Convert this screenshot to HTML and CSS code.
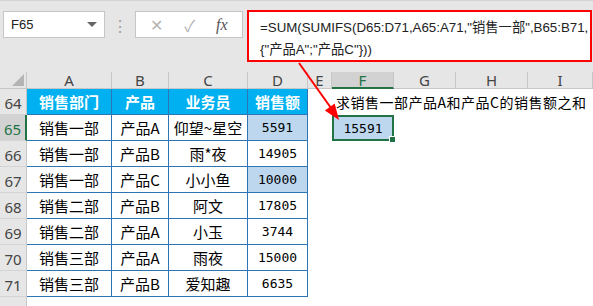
FILE: index.html
```html
<!DOCTYPE html>
<html lang="zh-CN">
<head>
  <meta charset="UTF-8" />
  <title>SUMIFS 多条件求和</title>
  <link rel="stylesheet" href="styles.css">
</head>
<body>

<div class="app">
  <!-- Formula bar -->
  <div class="formula-bar">
    <div class="name-box">
      <span>F65</span>
      <span class="dropdown"></span>
    </div>
    <div class="grip">⋮</div>
    <div class="fx-buttons">
      <span class="btn-x">✕</span>
      <span class="btn-ok">✓</span>
      <span class="btn-fx">fx</span>
    </div>
    <div class="formula">
      <div>=SUM(SUMIFS(D65:D71,A65:A71,"销售一部",B65:B71,</div>
      <div>{"产品A";"产品C"}))</div>
    </div>
  </div>

  <!-- Sheet -->
  <div class="sheet">
    <div class="corner"></div>
    <div class="ch">A</div>
    <div class="ch">B</div>
    <div class="ch">C</div>
    <div class="ch">D</div>
    <div class="ch">E</div>
    <div class="ch active">F</div>
    <div class="ch">G</div>
    <div class="ch">H</div>
    <div class="ch">I</div>

    <div class="rh">64</div>
    <div class="tc th">销售部门</div>
    <div class="tc th">产品</div>
    <div class="tc th">业务员</div>
    <div class="tc th">销售额</div>
    <div class="cell"></div>
    <div class="cell note">求销售一部产品A和产品C的销售额之和</div>
    <div class="cell"></div><div class="cell"></div><div class="cell"></div>

    <div class="rh active">65</div>
    <div class="tc">销售一部</div>
    <div class="tc">产品A</div>
    <div class="tc">仰望~星空</div>
    <div class="tc num hl">5591</div>
    <div class="cell"></div>
    <div class="cell num selected">15591</div>
    <div class="cell"></div><div class="cell"></div><div class="cell"></div>

    <div class="rh">66</div>
    <div class="tc">销售一部</div>
    <div class="tc">产品B</div>
    <div class="tc">雨*夜</div>
    <div class="tc num">14905</div>
    <div class="cell"></div><div class="cell"></div><div class="cell"></div><div class="cell"></div><div class="cell"></div>

    <div class="rh">67</div>
    <div class="tc">销售一部</div>
    <div class="tc">产品C</div>
    <div class="tc">小小鱼</div>
    <div class="tc num hl">10000</div>
    <div class="cell"></div><div class="cell"></div><div class="cell"></div><div class="cell"></div><div class="cell"></div>

    <div class="rh">68</div>
    <div class="tc">销售二部</div>
    <div class="tc">产品B</div>
    <div class="tc">阿文</div>
    <div class="tc num">17805</div>
    <div class="cell"></div><div class="cell"></div><div class="cell"></div><div class="cell"></div><div class="cell"></div>

    <div class="rh">69</div>
    <div class="tc">销售二部</div>
    <div class="tc">产品A</div>
    <div class="tc">小玉</div>
    <div class="tc num">3744</div>
    <div class="cell"></div><div class="cell"></div><div class="cell"></div><div class="cell"></div><div class="cell"></div>

    <div class="rh">70</div>
    <div class="tc">销售三部</div>
    <div class="tc">产品A</div>
    <div class="tc">雨夜</div>
    <div class="tc num">15000</div>
    <div class="cell"></div><div class="cell"></div><div class="cell"></div><div class="cell"></div><div class="cell"></div>

    <div class="rh">71</div>
    <div class="tc">销售三部</div>
    <div class="tc">产品B</div>
    <div class="tc">爱知趣</div>
    <div class="tc num">6635</div>
    <div class="cell"></div><div class="cell"></div><div class="cell"></div><div class="cell"></div><div class="cell"></div>

    <div class="rh"></div>
  </div>

  <!-- Red callout arrow -->
  <svg class="arrow" width="593" height="306" viewBox="0 0 593 306">
    <line x1="299" y1="63" x2="331" y2="108" stroke="#ff0000" stroke-width="2"/>
    <polygon points="339,120 324.9,110.4 334.7,103.5" fill="#ff0000"/>
  </svg>
</div>

</body>
</html>
```

FILE: styles.css
```css
body {
  margin: 0;
  font-family: "Noto Sans", "Noto Sans CJK SC", sans-serif;
  background-color: #ffffff;
  color: #000;
  overflow: hidden;
}

.app {
  width: 593px;
  height: 306px;
  position: relative;
  overflow: hidden;
}

/* Formula bar */
.formula-bar {
  height: 72px;
  background-color: #e6e6e6;
  border-top: 1px solid #d4d4d4;
  box-sizing: border-box;
  display: flex;
  align-items: flex-start;
  padding-top: 9px;
}

.name-box {
  margin-left: 3px;
  margin-top: 1px;
  width: 102px;
  height: 27px;
  box-sizing: border-box;
  background-color: white;
  border: 1px solid #c6c6c6;
  display: flex;
  align-items: center;
  justify-content: space-between;
  padding: 0 7px 0 7px;
  font-family: "Liberation Sans", sans-serif;
  font-size: 13px;
  color: #222;
}

.dropdown {
  width: 0;
  height: 0;
  border-left: 5px solid transparent;
  border-right: 5px solid transparent;
  border-top: 5px solid #666;
}

.grip {
  width: 30px;
  text-align: center;
  margin-top: 5px;
  font-size: 16px;
  color: #a0a0a0;
}

.fx-buttons {
  margin-top: 1px;
  width: 108px;
  height: 27px;
  box-sizing: border-box;
  background-color: white;
  border: 1px solid #c6c6c6;
  display: flex;
  align-items: center;
  justify-content: space-around;
  padding: 0 4px;
  color: #b4b4b4;
  font-size: 16px;
}

.btn-fx {
  font-family: "Liberation Serif", serif;
  font-style: italic;
  color: #555;
  font-size: 16px;
}

.formula {
  margin-left: 4px;
  width: 345px;
  height: 52px;
  box-sizing: border-box;
  background-color: white;
  border: 2px solid #ff0000;
  padding: 5px 0 0 11px;
  font-family: "Liberation Sans", "Noto Sans CJK SC", sans-serif;
  font-size: 13.3px;
  line-height: 22px;
  color: #222;
  white-space: nowrap;
}

/* Sheet grid */
.sheet {
  display: grid;
  grid-template-columns: 27px 85px 57px 79px 60px 24px 62px 62px 72px 1fr;
  grid-template-rows: 17px;
  grid-auto-rows: 26px;
}

.sheet > div {
  box-sizing: border-box;
  display: flex;
  align-items: center;
  justify-content: center;
}

.corner {
  background-color: #e6e6e6;
  border-right: 1px solid #c6c6c6;
  border-bottom: 1px solid #c6c6c6;
  position: relative;
}

.corner::after {
  content: "";
  position: absolute;
  right: 2px;
  bottom: 2px;
  border-left: 12px solid transparent;
  border-bottom: 12px solid #b4b4b4;
}

.ch {
  background-color: #e6e6e6;
  border-right: 1px solid #c6c6c6;
  border-bottom: 1px solid #c6c6c6;
  font-size: 15px;
  color: #444;
}

.ch.active {
  background-color: #d2d2d2;
  border-bottom: 2px solid #217346;
  color: #217346;
}

.rh {
  background-color: #e6e6e6;
  border-right: 1px solid #c6c6c6;
  border-bottom: 1px solid #d4d4d4;
  font-size: 15px;
  color: #444;
  align-items: flex-end !important;
  padding-bottom: 1px;
}

.rh.active {
  background-color: #d2d2d2;
  border-right: 2px solid #217346;
  color: #217346;
}

.tc {
  border-right: 1px solid #2e75b6;
  border-bottom: 1px solid #2e75b6;
  font-family: "Noto Sans CJK SC", sans-serif;
  font-size: 15px;
  white-space: nowrap;
}

.th {
  background-color: #00b0f0;
  color: white;
  font-weight: bold;
}

.num {
  font-family: "DejaVu Sans Mono", monospace;
  font-size: 13px;
}

.hl {
  background-color: #bdd7ee;
}

.note {
  justify-content: flex-start !important;
  padding-left: 4px;
  white-space: nowrap;
  overflow: visible;
  font-family: "Noto Sans CJK SC", sans-serif;
  font-size: 14px;
  letter-spacing: 0.5px;
}

.selected {
  background-color: #bdd7ee;
  border: 2px solid #217346;
  position: relative;
}

.selected::after {
  content: "";
  position: absolute;
  right: -4px;
  bottom: -4px;
  width: 5px;
  height: 5px;
  background-color: #217346;
  border: 1px solid white;
}

.arrow {
  position: absolute;
  left: 0;
  top: 0;
  pointer-events: none;
}
```
